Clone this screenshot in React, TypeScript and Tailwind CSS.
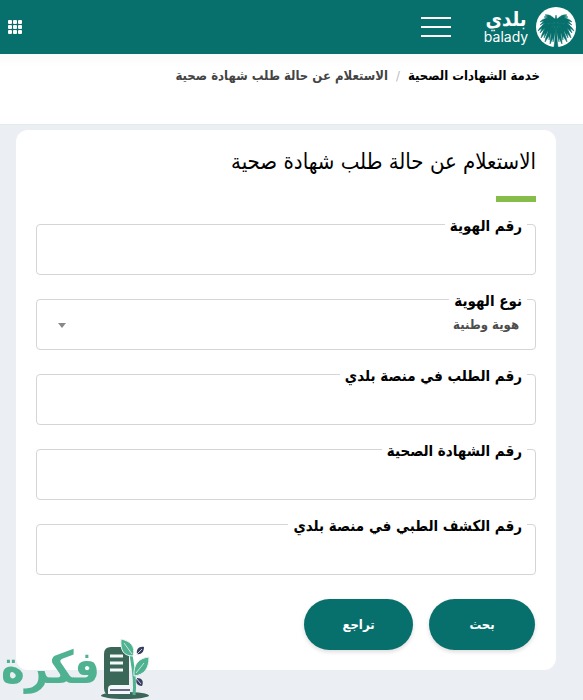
import type { ReactNode } from "react";

const fontStack = "font-['DejaVu_Sans_Condensed','DejaVu_Sans',sans-serif]";

function PalmEmblem() {
  const fronds = [
    "M20 16C18 10 14 7 9 8L12 9L8 10L12 11L9 12L14 13Z",
    "M20 17C14 10 8 10 4 15L8 14L4 18L9 16L6 19L13 16Z",
    "M20 17C11 14 5 18 2 24L6 21L4 26L9 21L7 25L14 19Z",
    "M20 17C12 17 6 24 5 31L9 26L8 31L12 24L12 27L16 20Z",
    "M20 17C14 20 10 27 9 35L13 29L13 33L15 26L16 28L18 21Z",
    "M20 18C16 23 14 30 14 37L17 31L17 35L19 26Z",
  ];
  return (
    <svg viewBox="0 0 40 40" className="size-10" aria-hidden="true">
      <circle cx="20" cy="20" r="20" fill="#fff" />
      <g fill="#07706d" stroke="#07706d" strokeWidth=".5" strokeLinejoin="round">
        {fronds.map((d) => (
          <path key={d} d={d} />
        ))}
        <g transform="matrix(-1 0 0 1 40 0)">
          {fronds.map((d) => (
            <path key={d} d={d} />
          ))}
        </g>
        <path d="M19 17C19.500 25 19 33 18 40H22C21 33 20.500 25 21 17Z" />
        <path d="M20 17L16 10L19 12L20 8L21 12L24 10Z" />
      </g>
    </svg>
  );
}

function Header() {
  return (
    <header className="flex h-[54px] items-center bg-[#07706d] pr-[7px] pl-2 text-white">
      <a href="#home" className="flex items-center gap-[6px]" aria-label="بلدي balady">
        <PalmEmblem />
        <span className="flex w-12 flex-col items-center">
          <span className="text-[20px] leading-5 font-bold">بلدي</span>
          <span dir="ltr" className="font-[Inter,sans-serif] text-[14px] leading-4">balady</span>
        </span>
      </a>
      <button type="button" aria-label="القائمة" className="mr-[31px] flex w-[30px] flex-col gap-[7px]">
        <span className="h-0.5 w-full bg-white" />
        <span className="h-0.5 w-full bg-white" />
        <span className="h-0.5 w-full bg-white" />
      </button>
      <button type="button" aria-label="التطبيقات" className="mr-auto grid grid-cols-3 gap-px">
        {Array.from({ length: 9 }, (_, i) => (
          <span key={i} className="size-1 rounded-[1px] bg-white" />
        ))}
      </button>
    </header>
  );
}

function Breadcrumb() {
  return (
    <nav
      aria-label="مسار التنقل"
      className="flex h-[71px] items-start border-b border-[#e6e9ec] bg-linear-to-b from-[#fafafa] to-white to-20% pt-3 pr-[43px] text-[13px] leading-5 font-bold"
    >
      <a href="#service" className="text-black">خدمة الشهادات الصحية</a>
      <span className="px-2 font-normal text-[#b8bcc0]">/</span>
      <span className="text-[#444]">الاستعلام عن حالة طلب شهادة صحية</span>
    </nav>
  );
}

function Field({ id, label, children }: { id: string; label: string; children?: ReactNode }) {
  return (
    <div className="relative">
      <label
        htmlFor={id}
        className="absolute -top-2.5 right-[9px] bg-white px-[5px] text-[15px] leading-6 font-bold text-black"
      >
        {label}
      </label>
      {children ?? (
        <input
          id={id}
          type="text"
          className="block h-[51px] w-full rounded border border-[#d5d5d5] bg-white px-4 text-[13px] text-[#444]"
        />
      )}
    </div>
  );
}

function Watermark() {
  return (
    <div dir="ltr" className="pointer-events-none fixed bottom-0 left-0 flex h-[62px] items-end opacity-95">
      <span dir="rtl" className="pb-1 pl-px text-[45px] leading-[56px] font-bold text-[#46ae8b]">فكرة</span>
      <svg viewBox="0 0 50 62" className="h-[62px] w-[50px]" aria-hidden="true">
        <ellipse cx="25" cy="57.500" rx="24" ry="3.500" fill="#315f50" />
        <path d="M4 16Q4 9 11 9H25Q29 9 29 13V57H10Q4 57 4 50Z" fill="#315f50" />
        <path d="M30 47H12Q8 47 8 51V56H30Z" fill="#f5f7f9" />
        <path d="M10 52H30" stroke="#2d3557" strokeWidth="1.500" />
        <path d="M10 18H23M10 25H23M10 32H23" stroke="#f5f7f9" strokeWidth="3" />
        <path d="M34 57C36 43 33 29 31 17" fill="none" stroke="#46ae8b" strokeWidth="3" />
        <path d="M21 1C30 3 36 8 33 18C24 18 20 13 21 1Z" fill="#46ae8b" stroke="#eef1f4" />
        <path d="M34 38C33 26 39 20 49 19C49 31 44 37 34 38Z" fill="#46ae8b" stroke="#eef1f4" />
        <path d="M24 5L32 16M36 35L44 25" stroke="#eef1f4" strokeWidth=".8" />
        <path d="M37 16C36 11 39 8 44 9C44 14 41 17 37 16Z" fill="#2d3557" />
        <path d="M37 40C42 40 44 43 42 48C37 48 35 44 37 40Z" fill="#2d3557" />
        <path d="M35 18L42 11M36 40L41 46" stroke="#eef1f4" strokeWidth=".8" />
      </svg>
    </div>
  );
}

const buttonClass =
  "h-[51px] rounded-full bg-[#07706d] text-[13px] font-bold text-white shadow-[0_2px_4px_rgba(0,0,0,0.14)]";

export default function App() {
  return (
    <div dir="rtl" className={`min-h-screen bg-[#ebeef3] ${fontStack}`}>
      <Header />
      <Breadcrumb />
      <main className="mt-[5px] mr-[27px] ml-4 rounded-xl bg-white p-5">
        <h1 className="text-[22px] leading-6 text-black">الاستعلام عن حالة طلب شهادة صحية</h1>
        <div className="mt-[22px] h-1.5 w-10 bg-[#86bc49]" />
        <form className="mt-[22px]" onSubmit={(e) => e.preventDefault()}>
          <div className="flex flex-col gap-6">
            <Field id="identity-number" label="رقم الهوية" />
            <Field id="identity-type" label="نوع الهوية">
              <select
                id="identity-type"
                className="block h-[51px] w-full appearance-none rounded border border-[#d5d5d5] bg-white px-4 text-[13px] font-bold text-[#4d4d4d]"
              >
                <option>هوية وطنية</option>
              </select>
              <span className="pointer-events-none absolute top-6 left-[22px] border-x-4 border-t-[5px] border-x-transparent border-t-[#888]" />
            </Field>
            <Field id="request-number" label="رقم الطلب في منصة بلدي" />
            <Field id="certificate-number" label="رقم الشهادة الصحية" />
            <Field id="medical-number" label="رقم الكشف الطبي في منصة بلدي" />
          </div>
          <div className="mt-6 flex gap-4 pr-px">
            <button type="submit" className={`w-[106px] ${buttonClass}`}>بحث</button>
            <button type="reset" className={`w-[109px] ${buttonClass}`}>تراجع</button>
          </div>
        </form>
      </main>
      <Watermark />
    </div>
  );
}
